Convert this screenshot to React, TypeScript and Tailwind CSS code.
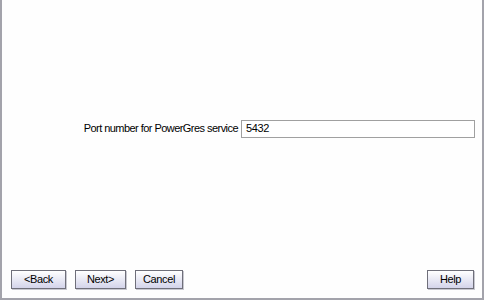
import React from "react";

function Btn({ label, w }: { label: string; w: string }) {
  return (
    <div className={`${w} h-[19px] border border-[#6f6f7a] bg-gradient-to-b from-[#ffffff] to-[#d4d4ea] shadow-[1px_1px_0_#c8c8d0] flex items-center justify-center text-[11px] tracking-[-0.4px] text-black`}>
      {label}
    </div>
  );
}

export default function App() {
  return (
    <div className="w-[484px] h-[300px] bg-white flex flex-col" style={{ fontFamily: '"Liberation Sans", Arial, sans-serif' }}>
      <div className="flex-1 flex flex-col border-l-2 border-r-2 border-b-2 border-[#a3a3ab] bg-[#fefefe]">
        <div className="h-[119px]" />
        <div className="flex items-center h-[19px]">
          <div className="w-[237px] text-right text-[11px] tracking-[-0.55px] text-black pr-[1px]">Port number for PowerGres service</div>
          <div className="ml-[2px] w-[234px] h-[18px] border border-[#a0a0a0] bg-white flex items-center pl-[4px] text-[11px] tracking-[-0.4px] text-black">5432</div>
        </div>
        <div className="flex-1" />
        <div className="flex items-center pl-[9px] pr-[8px] h-[19px] mb-[9px]">
          <Btn label="<Back" w="w-[55px]" />
          <div className="w-[9px]" />
          <Btn label="Next>" w="w-[51px]" />
          <div className="w-[9px]" />
          <Btn label="Cancel" w="w-[48px]" />
          <div className="flex-1" />
          <Btn label="Help" w="w-[47px]" />
        </div>
      </div>
    </div>
  );
}
